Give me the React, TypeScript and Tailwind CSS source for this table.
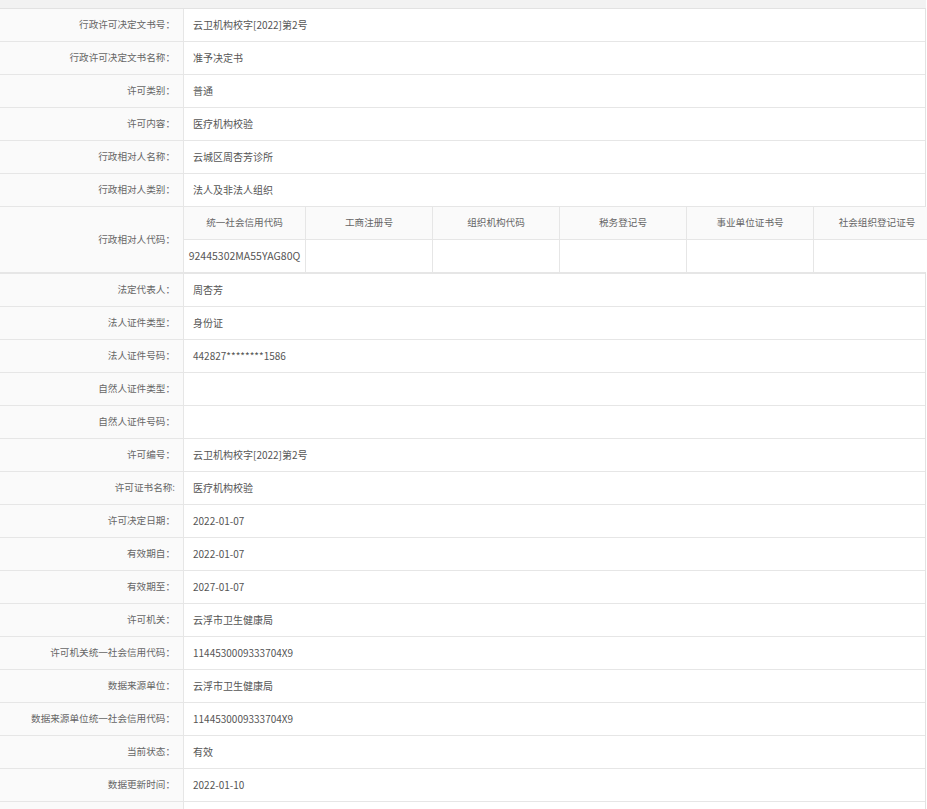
import React from 'react';

type Row = { label: string; value?: string };

const topRows: Row[] = [
  { label: '行政许可决定文书号：', value: '云卫机构校字[2022]第2号' },
  { label: '行政许可决定文书名称：', value: '准予决定书' },
  { label: '许可类别：', value: '普通' },
  { label: '许可内容：', value: '医疗机构校验' },
  { label: '行政相对人名称：', value: '云城区周杏芳诊所' },
  { label: '行政相对人类别：', value: '法人及非法人组织' },
];

const bottomRows: Row[] = [
  { label: '法定代表人：', value: '周杏芳' },
  { label: '法人证件类型：', value: '身份证' },
  { label: '法人证件号码：', value: '442827********1586' },
  { label: '自然人证件类型：' },
  { label: '自然人证件号码：' },
  { label: '许可编号：', value: '云卫机构校字[2022]第2号' },
  { label: '许可证书名称:', value: '医疗机构校验' },
  { label: '许可决定日期：', value: '2022-01-07' },
  { label: '有效期自：', value: '2022-01-07' },
  { label: '有效期至：', value: '2027-01-07' },
  { label: '许可机关：', value: '云浮市卫生健康局' },
  { label: '许可机关统一社会信用代码：', value: '1144530009333704X9' },
  { label: '数据来源单位：', value: '云浮市卫生健康局' },
  { label: '数据来源单位统一社会信用代码：', value: '1144530009333704X9' },
  { label: '当前状态：', value: '有效' },
  { label: '数据更新时间：', value: '2022-01-10' },
  { label: '' },
];

const codeCols = [
  { title: '统一社会信用代码', value: '92445302MA55YAG80Q', w: 'w-[122px]' },
  { title: '工商注册号', value: '', w: 'w-[127px]' },
  { title: '组织机构代码', value: '', w: 'w-[127px]' },
  { title: '税务登记号', value: '', w: 'w-[127px]' },
  { title: '事业单位证书号', value: '', w: 'w-[127px]' },
  { title: '社会组织登记证号', value: '', w: 'w-[127px]' },
];

function InfoRow({ label, value }: Row) {
  return (
    <div className="flex h-[33px] border-b border-[#e6e6e6]">
      <div className="w-[184px] shrink-0 bg-[#fafafa] border-r border-[#e6e6e6] flex items-center justify-end pr-2 text-[#666]">
        {label}
      </div>
      <div className="flex-1 flex items-center pl-[9px] text-[#555] bg-white text-[10px]">{value}</div>
    </div>
  );
}

export default function App() {
  return (
    <div
      className="w-[927px] h-[809px] overflow-hidden bg-white text-[9.6px] leading-none [text-spacing-trim:space-all]"
      style={{ fontFamily: '"Noto Sans CJK SC", "Noto Sans", sans-serif' }}
    >
      <div className="h-[9px] bg-[#f2f2f2] border-b border-[#e2e2e2] w-[926px]" />
      <div className="w-[926px] border-r border-[#e2e2e2]">
        {topRows.map((r, i) => (
          <InfoRow key={i} {...r} />
        ))}

        {/* 行政相对人代码 */}
        <div className="flex h-[67px] border-b-2 border-[#e6e6e6]">
          <div className="w-[184px] shrink-0 bg-[#fafafa] border-r border-[#e6e6e6] flex items-center justify-end pr-2 text-[#666]">
            行政相对人代码：
          </div>
          <div className="flex flex-col">
            <div className="flex h-[33px] border-b border-[#e6e6e6] bg-[#fafafa]">
              {codeCols.map((c, i) => (
                <div
                  key={i}
                  className={`${c.w} shrink-0 border-r border-[#e6e6e6] flex items-center justify-center text-[#666]`}
                >
                  {c.title}
                </div>
              ))}
            </div>
            <div className="flex h-[32px] bg-white">
              {codeCols.map((c, i) => (
                <div
                  key={i}
                  className={`${c.w} shrink-0 border-r border-[#e6e6e6] flex items-center justify-center text-[#555] text-[10.5px]`}
                >
                  {c.value}
                </div>
              ))}
            </div>
          </div>
        </div>

        {bottomRows.map((r, i) => (
          <InfoRow key={i} {...r} />
        ))}
      </div>
    </div>
  );
}
